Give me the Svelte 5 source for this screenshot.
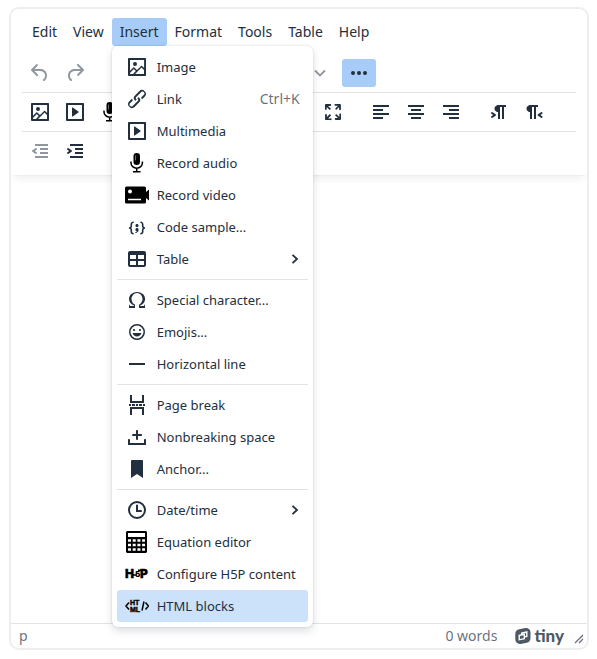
<script>
  const menus = ['Edit', 'View', 'Insert', 'Format', 'Tools', 'Table', 'Help'];

  const insertGroups = [
    [
      { icon: 'image', label: 'Image' },
      { icon: 'link', label: 'Link', shortcut: 'Ctrl+K' },
      { icon: 'embed', label: 'Multimedia' },
      { icon: 'mic', label: 'Record audio' },
      { icon: 'video', label: 'Record video' },
      { icon: 'code', label: 'Code sample...' },
      { icon: 'table', label: 'Table', submenu: true }
    ],
    [
      { icon: 'omega', label: 'Special character...' },
      { icon: 'emoji', label: 'Emojis...' },
      { icon: 'rule', label: 'Horizontal line' }
    ],
    [
      { icon: 'pagebreak', label: 'Page break' },
      { icon: 'nbsp', label: 'Nonbreaking space' },
      { icon: 'anchor', label: 'Anchor...' }
    ],
    [
      { icon: 'time', label: 'Date/time', submenu: true },
      { icon: 'calc', label: 'Equation editor' },
      { icon: 'h5p', label: 'Configure H5P content' },
      { icon: 'html', label: 'HTML blocks', active: true }
    ]
  ];

  const mediaTools = [
    { icon: 'image', label: 'Image' },
    { icon: 'embed', label: 'Multimedia' },
    { icon: 'mic', label: 'Record audio' }
  ];
  const alignTools = [
    { icon: 'left', label: 'Align left' },
    { icon: 'center', label: 'Align center' },
    { icon: 'right', label: 'Align right' }
  ];
  const directionTools = [
    { icon: 'ltr', label: 'Left to right' },
    { icon: 'rtl', label: 'Right to left' }
  ];

  const paths = {
    undo: 'M6.4 8H12c3.7 0 6.2 2 6.8 5.1.6 2.7-.4 5.6-2.3 6.8a1 1 0 0 1-1-1.8c1.1-.6 1.8-2.7 1.4-4.6-.5-2.1-2.1-3.5-4.9-3.5H6.4l3.3 3.3a1 1 0 1 1-1.4 1.4l-5-5a1 1 0 0 1 0-1.4l5-5a1 1 0 0 1 1.4 1.4L6.4 8Z',
    redo: 'M17.6 10H12c-2.8 0-4.4 1.4-4.9 3.5-.4 2 .3 4 1.4 4.6a1 1 0 1 1-1 1.8c-2-1.2-2.9-4.1-2.3-6.8.6-3 3-5.1 6.8-5.1h5.6l-3.3-3.3a1 1 0 1 1 1.4-1.4l5 5a1 1 0 0 1 0 1.4l-5 5a1 1 0 0 1-1.4-1.4l3.3-3.3Z',
    more: 'M6 10a2 2 0 1 0 0 4 2 2 0 0 0 0-4Zm6 0a2 2 0 1 0 0 4 2 2 0 0 0 0-4Zm6 0a2 2 0 1 0 0 4 2 2 0 0 0 0-4Z',
    image: 'm5 15.7 3.3-3.2c.3-.3.7-.3 1 0L12 15l4.1-4c.3-.4.8-.4 1 0l2 1.9V5H5v10.7ZM5 18V19h3l2.8-2.9-2-2L5 17.9Zm14-3-2.5-2.4-6.4 6.5H19v-4ZM4 3h16c.6 0 1 .4 1 1v16c0 .6-.4 1-1 1H4a1 1 0 0 1-1-1V4c0-.6.4-1 1-1Zm6 8a2 2 0 1 0 0-4 2 2 0 0 0 0 4Z',
    link: 'M6.2 12.3a1 1 0 0 1 1.4 1.4l-2 2a2 2 0 1 0 2.6 2.8l4.8-4.8a1 1 0 0 0 0-1.4 1 1 0 1 1 1.4-1.3 2.9 2.9 0 0 1 0 4L9.6 20a3.9 3.9 0 0 1-5.5-5.5l2-2Zm11.6-.6a1 1 0 0 1-1.4-1.4l2-2a2 2 0 1 0-2.6-2.8L11 10.3a1 1 0 0 0 0 1.4A1 1 0 1 1 9.6 13a2.9 2.9 0 0 1 0-4L14.4 4a3.9 3.9 0 0 1 5.5 5.5l-2 2Z',
    embed: 'M4 3h16c.6 0 1 .4 1 1v16c0 .6-.4 1-1 1H4a1 1 0 0 1-1-1V4c0-.6.4-1 1-1Zm1 2v14h14V5H5Zm4.8 2.6 5.6 4a.5.5 0 0 1 0 .8l-5.6 4A.5.5 0 0 1 9 16V8a.5.5 0 0 1 .8-.4Z',
    code: 'M7.1 11a2.8 2.8 0 0 1-.8 2 2.8 2.8 0 0 1 .8 2v1.7c0 .3.1.6.4.8.2.3.5.4.8.4.3 0 .4.2.4.4v.8c0 .2-.1.4-.4.4-.7 0-1.4-.3-2-.8-.5-.6-.8-1.3-.8-2V15c0-.3-.1-.6-.4-.8-.2-.3-.5-.4-.8-.4a.4.4 0 0 1-.4-.4v-.8c0-.2.2-.4.4-.4.3 0 .6-.1.8-.4.3-.2.4-.5.4-.8V9.3c0-.7.3-1.4.8-2 .6-.5 1.3-.8 2-.8.3 0 .4.2.4.4v.8c0 .2-.1.4-.4.4-.3 0-.6.1-.8.4-.3.2-.4.5-.4.8V11Zm9.8 0V9.3c0-.3-.1-.6-.4-.8-.2-.3-.5-.4-.8-.4a.4.4 0 0 1-.4-.4V7c0-.2.1-.4.4-.4.7 0 1.4.3 2 .8.5.6.8 1.3.8 2V11c0 .3.1.6.4.8.2.3.5.4.8.4.2 0 .4.2.4.4v.8c0 .2-.2.4-.4.4-.3 0-.6.1-.8.4-.3.2-.4.5-.4.8v1.7c0 .7-.3 1.4-.8 2-.6.5-1.3.8-2 .8a.4.4 0 0 1-.4-.4v-.8c0-.2.1-.4.4-.4.3 0 .6-.1.8-.4.3-.2.4-.5.4-.8V15a2.8 2.8 0 0 1 .8-2 2.8 2.8 0 0 1-.8-2Zm-3.3-.4c0 .4-.1.8-.5 1.1-.3.3-.7.5-1.1.5-.4 0-.8-.2-1.1-.5-.4-.3-.5-.7-.5-1.1 0-.5.1-.9.5-1.2.3-.3.7-.4 1.1-.4.4 0 .8.1 1.1.4.4.3.5.7.5 1.2ZM12 13c.4 0 .8.1 1.1.5.4.3.5.7.5 1.1 0 1-.1 1.6-.5 2a3 3 0 0 1-1.1 1c-.4.3-.8.4-1.1.4a.5.5 0 0 1-.5-.5V17a3 3 0 0 0 1-.2l.6-.6c-.6 0-1-.2-1.3-.5-.2-.3-.3-.7-.3-1 0-.5.1-1 .5-1.2.3-.4.7-.5 1.1-.5Z',
    table: 'M19 4a2 2 0 0 1 2 2v12a2 2 0 0 1-2 2H5a2 2 0 0 1-2-2V6c0-1.1.9-2 2-2h14ZM5 14v4h6v-4H5Zm14 0h-6v4h6v-4Zm0-6h-6v4h6V8ZM5 12h6V8H5v4Z',
    omega: 'M15 18h4l1-2v4h-6v-3.3l1.4-1a6 6 0 0 0 1.8-2.9 6.3 6.3 0 0 0-.1-4.1 5.8 5.8 0 0 0-3-3.2c-.6-.3-1.3-.5-2.1-.5a5.1 5.1 0 0 0-3.9 1.8 6.3 6.3 0 0 0-1.3 6 6.2 6.2 0 0 0 1.8 3l1.4.9V20H4v-4l1 2h4v-.5l-2-1L5.4 15A6.5 6.5 0 0 1 4 11c0-1 .2-1.9.6-2.7A7 7 0 0 1 6.3 6C7.1 5.4 8 5 9 4.5c1-.3 2-.5 3.1-.5a8.8 8.8 0 0 1 5.7 2 7 7 0 0 1 1.7 2.3 6 6 0 0 1 .2 4.8c-.2.7-.6 1.3-1 1.9a7.6 7.6 0 0 1-3.6 2.5v.5Z',
    emoji: 'M9 11c.6 0 1-.4 1-1s-.4-1-1-1a1 1 0 0 0-1 1c0 .6.4 1 1 1Zm6 0c.6 0 1-.4 1-1s-.4-1-1-1a1 1 0 0 0-1 1c0 .6.4 1 1 1Zm-3 5.5c2.1 0 4-1.5 4.4-3.5H7.6c.5 2 2.3 3.5 4.4 3.5ZM12 4a8 8 0 1 0 0 16 8 8 0 0 0 0-16Zm0 14.5a6.5 6.5 0 1 1 0-13 6.5 6.5 0 0 1 0 13Z',
    rule: 'M4 11h16v2H4z',
    pagebreak: 'M5 2h2v6h10V2h2v8H5V2Zm0 20h2v-6h10v6h2v-8H5v8ZM4 11h2v2H4zM7 11h3v2H7zM11 11h2v2h-2zM14 11h3v2h-3zM18 11h2v2h-2z',
    nbsp: 'M11 11H8a1 1 0 1 1 0-2h3V6c0-.6.4-1 1-1s1 .4 1 1v3h3c.6 0 1 .4 1 1s-.4 1-1 1h-3v3c0 .6-.4 1-1 1a1 1 0 0 1-1-1v-3Zm10 4v5H3v-5c0-.6.4-1 1-1s1 .4 1 1v3h14v-3c0-.6.4-1 1-1s1 .4 1 1Z',
    anchor: 'M6 4v17l6-4 6 4V4c0-.6-.4-1-1-1H7a1 1 0 0 0-1 1Z',
    time: 'M12 19a7 7 0 1 0 0-14 7 7 0 0 0 0 14Zm0 2a9 9 0 1 1 0-18 9 9 0 0 1 0 18ZM16 12h-3V7.5a1 1 0 0 0-2 0V14h5a1 1 0 0 0 0-2Z',
    fullscreen: 'm15.3 10-1.2-1.3 2.9-3h-2.3a.9.9 0 1 1 0-1.7H19c.5 0 .9.4.9.9v4.4a.9.9 0 1 1-1.8 0V7l-2.9 3Zm0 4 3 3v-2.3a.9.9 0 1 1 1.7 0V19c0 .5-.4.9-.9.9h-4.4a.9.9 0 1 1 0-1.8H17l-3-2.9 1.3-1.2ZM10 15.4l-2.9 3h2.3a.9.9 0 1 1 0 1.7H5a.9.9 0 0 1-.9-.9v-4.4a.9.9 0 1 1 1.8 0V17l2.9-3 1.2 1.3ZM8.7 10 5.7 7v2.3a.9.9 0 0 1-1.7 0V5c0-.5.4-.9.9-.9h4.4a.9.9 0 0 1 0 1.8H7l3 2.9-1.3 1.2Z',
    left: 'M4 5h16v2H4zM4 9h10v2H4zM4 13h16v2H4zM4 17h10v2H4z',
    center: 'M4 5h16v2H4zM7 9h10v2H7zM4 13h16v2H4zM7 17h10v2H7z',
    right: 'M4 5h16v2H4zM10 9h10v2H10zM4 13h16v2H4zM10 17h10v2H10z',
    ltr: 'M11 5h8v2h-2v12h-2V7h-2v12h-2v-7c-.5 0-1 0-1.4-.3A3.4 3.4 0 0 1 7.8 10a3.3 3.3 0 0 1 0-2.8 3.4 3.4 0 0 1 1.8-1.8L11 5ZM4.4 16.2 6.2 15l-1.8-1.2a1 1 0 0 1 1.2-1.6l3 2a1 1 0 0 1 0 1.6l-3 2a1 1 0 1 1-1.2-1.6Z',
    rtl: 'M8 5h8v2h-2v12h-2V7h-2v12H8v-7c-.5 0-1 0-1.4-.3A3.4 3.4 0 0 1 4.8 10a3.3 3.3 0 0 1 0-2.8 3.4 3.4 0 0 1 1.8-1.8L8 5Zm12.2 11.2a1 1 0 1 1-1.2 1.6l-3-2a1 1 0 0 1 0-1.6l3-2a1 1 0 1 1 1.2 1.6L18.4 15l1.8 1.2Z',
    outdent: 'M7 5h13v2H7zM12 9h8v2h-8zM12 13h8v2h-8zM7 17h13v2H7zM8.6 13.2a1 1 0 0 1-1.2 1.6l-3-2a1 1 0 0 1 0-1.6l3-2a1 1 0 0 1 1.2 1.6L6.8 12l1.8 1.2Z',
    indent: 'M7 5h13v2H7zM12 9h8v2h-8zM12 13h8v2h-8zM7 17h13v2H7zM4.4 13.2 6.2 12l-1.8-1.2a1 1 0 0 1 1.2-1.6l3 2a1 1 0 0 1 0 1.6l-3 2a1 1 0 0 1-1.2-1.6Z'
  };
</script>

{#snippet glyph(name)}
  <svg class="icon" width="24" height="24" viewBox="0 0 24 24" aria-hidden="true">
    {#if name === 'mic'}
      <rect x="8.5" y="2" width="6.5" height="12" rx="3.2" fill="#000" />
      <path d="M6 10.5v1.5a5.7 5.2 0 0 0 11.4 0v-1.5M11.7 17v3.5M8 20.7h7.5" fill="none" stroke="#000" stroke-width="1.5" />
      <path d="M10.5 4.5v5" stroke="#888" stroke-width=".8" />
    {:else if name === 'video'}
      <path fill="#000" d="M1.5 3.5h18a1.5 1.5 0 0 1 1.5 1.5v4l3-2.5v11L21 15v4a1.5 1.5 0 0 1-1.5 1.5h-18A1.5 1.5 0 0 1 0 19V5a1.5 1.5 0 0 1 1.5-1.5Z" />
      <circle cx="5" cy="8.5" r="2" fill="#fff" />
      <path d="M3 16.5h13" stroke="#fff" stroke-width="1.5" />
    {:else if name === 'calc'}
      <path fill="#000" fill-rule="evenodd" d="M2 1h19l1 1v20l-1 1H2l-1-1V2ZM3 3v4h17V3Z" />
      <path stroke="#fff" stroke-width="2.5" stroke-dasharray="3 1.7" d="M3 10.5h17M3 15h17M3 19.5h17" />
    {:else if name === 'h5p'}
      <g fill="#000" font-family="Inter" font-weight="900">
        <text x="0" y="16" font-size="12" stroke="#000" stroke-width=".3">H</text>
        <text x="10" y="15" font-size="8">5</text>
        <text x="15" y="16" font-size="12" stroke="#000" stroke-width=".3">P</text>
      </g>
      <path d="M8 13h4M13 8.2h5" stroke="#000" stroke-width="1.5" />
    {:else if name === 'html'}
      <path d="M4 8.5 1 12l3 3.5M20.5 8.5l3 3.5-3 3.500M19 7.500l-2 9" fill="none" stroke="#000" stroke-width="1.500" />
      <g fill="#000" stroke="#000" stroke-width=".4" font-family="Liberation Sans" font-weight="700" font-size="7">
        <text x="5" y="11">HT</text>
        <text x="5" y="18">ML</text>
      </g>
    {:else}
      <path fill="currentColor" fill-rule={name === 'image' || name === 'table' ? 'evenodd' : 'nonzero'} d={paths[name]} />
    {/if}
  </svg>
{/snippet}

{#snippet tool(t)}
  <button class="tool" type="button" aria-label={t.label} disabled={t.disabled}>{@render glyph(t.icon)}</button>
{/snippet}

<main class="page">
  <div class="editor">
    <header class="header">
      <nav class="menubar" aria-label="Editor menu">
        {#each menus as name}
          <div class="menu-slot">
            <button class="menu-button" class:open={name === 'Insert'} type="button">{name}</button>
            {#if name === 'Insert'}
              <div class="menu" role="menu">
                {#each insertGroups as group}
                  <div class="menu-group">
                    {#each group as item}
                      <button class="item" class:active={item.active} type="button" role="menuitem">
                        {@render glyph(item.icon)}
                        <span class="label">{item.label}</span>
                        {#if item.shortcut}<span class="shortcut">{item.shortcut}</span>{/if}
                        {#if item.submenu}
                          <svg width="10" height="10" viewBox="0 0 10 10" aria-hidden="true"><path d="M2.5.8 7 5 2.5 9.2" fill="none" stroke="currentColor" stroke-width="1.8" /></svg>
                        {/if}
                      </button>
                    {/each}
                  </div>
                {/each}
              </div>
            {/if}
          </div>
        {/each}
      </nav>

      <div class="toolbars">
        <div class="toolbar">
          <div class="group">
            {@render tool({ icon: 'undo', label: 'Undo', disabled: true })}
            {@render tool({ icon: 'redo', label: 'Redo', disabled: true })}
          </div>
          <button class="picker" type="button" aria-label="Block format" disabled>
            <svg width="12" height="10" viewBox="0 0 12 10" aria-hidden="true"><path d="m1 2.5 5 5 5-5" fill="none" stroke="currentColor" stroke-width="1.8" /></svg>
          </button>
          <button class="tool on" type="button" aria-label="Reveal or hide additional toolbar items">{@render glyph('more')}</button>
        </div>
        <div class="toolbar">
          <div class="group">{#each mediaTools as t}{@render tool(t)}{/each}</div>
          <div class="group wide"></div>
          <div class="group">{@render tool({ icon: 'fullscreen', label: 'Fullscreen' })}</div>
          <div class="group">{#each alignTools as t}{@render tool(t)}{/each}</div>
          <div class="group">{#each directionTools as t}{@render tool(t)}{/each}</div>
        </div>
        <div class="toolbar">
          <div class="group">
            {@render tool({ icon: 'outdent', label: 'Decrease indent', disabled: true })}
            {@render tool({ icon: 'indent', label: 'Increase indent' })}
          </div>
        </div>
      </div>
    </header>

    <div class="content" contenteditable="true" role="textbox" tabindex="0" aria-label="Rich text area"></div>

    <footer class="status">
      <span class="path">p</span>
      <span>0 words</span>
      <a class="brand" href="#tiny" aria-label="tiny">
        <svg width="16" height="16" viewBox="0 0 16 16" aria-hidden="true">
          <path fill="currentColor" fill-rule="evenodd" d="M4.2 1.3 10.4.1C13.1-.3 15.5 1.7 15.5 4.3v5.9c0 2.2-1.6 4-3.7 4.5l-6.3 1.2C2.7 16.3.3 14.3.3 11.6V5.7c0-2.2 1.7-4 3.9-4.4ZM6 4.4v1.9l-2.5.5v5.8l6.500-1.300V9.500l2.500-.5V3.100L6 4.400Zm1.400 1.300 3.700-.7v2.900l-1.100.2V5.500l-2.600.6ZM4.900 7.900 8.600 7.200v3l-3.700.700V7.900Z" />
        </svg>
        <span>tiny</span>
      </a>
      <svg class="resize" width="10" height="10" viewBox="0 0 10 10" aria-hidden="true"><path d="m1 9 8-8M5 9l4-4" stroke="currentColor" stroke-width="1.2" /></svg>
    </footer>
  </div>
</main>

<style>
  :global(body) {
    background: #fff;
  }
  .page {
    box-sizing: border-box;
    height: 100vh;
    padding: 7px 8px 9px 9px;
    font: 14px/20px 'Noto Sans', sans-serif;
    color: #222f3e;
  }
  .editor {
    box-sizing: border-box;
    height: 100%;
    display: flex;
    flex-direction: column;
    border: 2px solid #eee;
    border-radius: 10px;
  }
  button {
    font: inherit;
    color: inherit;
    background: none;
    border: 0;
    margin: 0;
    padding: 0;
  }
  svg {
    display: block;
    flex: none;
  }
  .header {
    padding: 4px 0 5px;
    box-shadow: 0 2px 2px -2px rgba(34, 47, 62, 0.1), 0 8px 8px -4px rgba(34, 47, 62, 0.07);
  }
  .menubar {
    display: flex;
    padding: 5px 13px 7px;
  }
  .menu-slot {
    position: relative;
  }
  .menu-button {
    height: 28px;
    padding: 0 8px;
    border-radius: 3px;
  }
  .open,
  .on {
    background: #a6ccf7;
  }
  .menu {
    position: absolute;
    z-index: 1;
    top: 28px;
    left: 0;
    box-sizing: border-box;
    min-width: 201px;
    padding: 1px;
    background: #fff;
    border-radius: 6px;
    box-shadow: 0 0 2px rgba(34, 47, 62, 0.2), 0 4px 8px rgba(34, 47, 62, 0.15);
  }
  .menu-group {
    padding: 4px 0;
    margin: 0 4px;
  }
  .menu-group + .menu-group {
    border-top: 1px solid #e3e3e3;
  }
  .item {
    display: flex;
    align-items: center;
    gap: 8px;
    width: 100%;
    height: 32px;
    padding: 0 8px;
    border-radius: 3px;
    text-align: left;
    white-space: nowrap;
  }
  .active {
    background: #cce2fa;
  }
  .label {
    flex: 1;
    font-size: 13px;
  }
  .shortcut,
  .status {
    color: rgba(34, 47, 62, 0.7);
  }
  .toolbars {
    padding: 0 11px;
  }
  .toolbar {
    display: flex;
    gap: 14px;
    padding: 5px 1px;
    border-top: 1px solid #e3e3e3;
  }
  .toolbar:first-child {
    border-top-color: transparent;
  }
  .group {
    display: flex;
    gap: 1px;
  }
  .wide {
    width: 161px;
  }
  .tool {
    display: flex;
    align-items: center;
    justify-content: center;
    width: 34px;
    height: 28px;
    border-radius: 3px;
  }
  .tool:disabled,
  .picker {
    color: rgba(34, 47, 62, 0.5);
  }
  .picker {
    display: flex;
    align-items: center;
    justify-content: flex-end;
    width: 222px;
    padding-right: 2px;
  }
  .content {
    flex: 1;
    outline: 0;
  }
  .status {
    display: flex;
    align-items: center;
    height: 24px;
    padding: 0 3px 0 8px;
    border-top: 1px solid #e3e3e3;
  }
  .path {
    flex: 1;
  }
  .brand {
    display: flex;
    align-items: center;
    gap: 3px;
    margin: 0 10px 0 18px;
    color: #4e5965;
    font: 900 17px/20px Lato, sans-serif;
    text-decoration: none;
  }
  .resize {
    align-self: flex-end;
    margin-bottom: 4px;
  }
</style>
